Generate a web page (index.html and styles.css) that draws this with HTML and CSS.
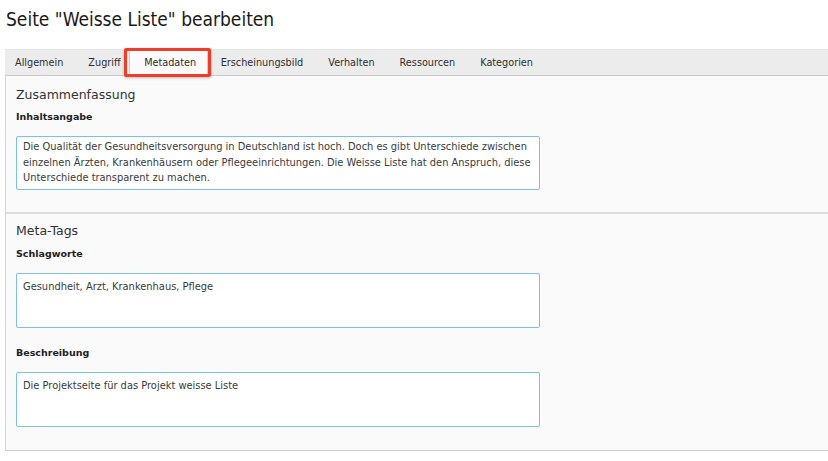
FILE: index.html
```html
<!DOCTYPE html>
<html lang="de">
<head>
<meta charset="utf-8">
<title>Seite bearbeiten</title>
<link rel="stylesheet" href="styles.css">
</head>
<body>
<div class="page">
  <h1 class="title">Seite "Weisse Liste" bearbeiten</h1>
  <div class="editor">
    <ul class="tabs">
      <li class="tab">Allgemein</li>
      <li class="tab">Zugriff</li>
      <li class="tab active">Metadaten</li>
      <li class="tab">Erscheinungsbild</li>
      <li class="tab">Verhalten</li>
      <li class="tab">Ressourcen</li>
      <li class="tab">Kategorien</li>
    </ul>
    <div class="panel">
      <section class="section first">
        <h2 class="section-title">Zusammenfassung</h2>
        <label class="field-label">Inhaltsangabe</label>
        <div class="textarea tall">Die Qualität der Gesundheitsversorgung in Deutschland ist hoch. Doch es gibt Unterschiede zwischen einzelnen Ärzten, Krankenhäusern oder Pflegeeinrichtungen. Die Weisse Liste hat den Anspruch, diese Unterschiede transparent zu machen.</div>
      </section>
      <section class="section second">
        <h2 class="section-title">Meta-Tags</h2>
        <label class="field-label">Schlagworte</label>
        <div class="textarea">Gesundheit, Arzt, Krankenhaus, Pflege</div>
        <label class="field-label spaced">Beschreibung</label>
        <div class="textarea">Die Projektseite für das Projekt weisse Liste</div>
      </section>
    </div>
  </div>
</div>
</body>
</html>
```

FILE: styles.css
```css
html, body {
  margin: 0;
  padding: 0;
  background: #ffffff;
}

.page {
  padding: 8px 0 0 5px;
  font-family: "DejaVu Sans", Verdana, sans-serif;
  color: #333;
}

.title {
  margin: 0 0 0 1px;
  font-family: "DejaVu Sans Condensed", "DejaVu Sans", sans-serif;
  font-stretch: condensed;
  font-weight: normal;
  font-size: 19px;
  line-height: 22px;
  color: #1a1a1a;
  height: 41px;
}

.editor {
  display: flex;
  flex-direction: column;
}

.tabs {
  list-style: none;
  margin: 0;
  padding: 0;
  display: flex;
  height: 25px;
  background: #ececec;
  border-top: 1px solid #e6e6e6;
  border-bottom: 1px solid #c9c9c9;
}

.tab {
  position: relative;
  padding: 0 12.5px;
  font-size: 9.7px;
  line-height: 25px;
  color: #2e2e2e;
  white-space: nowrap;
}

.tab:first-child {
  padding-left: 10px;
}

.tab.active {
  margin-left: -4px;
  padding: 0 11px 0 14px;
  background: #fafafa;
  border-left: 1px solid #cfcfcf;
  border-right: 1px solid #cfcfcf;
  height: 26px;
}

.tab.active::after {
  content: "";
  position: absolute;
  left: -6px;
  right: -4px;
  top: -2px;
  bottom: -1px;
  border: 3px solid #ea3f2a;
  border-radius: 2px;
  box-shadow: 0 1px 3px rgba(0, 0, 0, 0.25);
}

.panel {
  background: #fafafa;
  border-left: 1px solid #d6d6d6;
  border-bottom: 1px solid #cccccc;
}

.section {
  padding: 9px 10px 22px 10px;
}

.section.second {
  border-top: 2px solid #dedede;
  padding-top: 7px;
  padding-bottom: 23px;
}

.section-title {
  margin: 0;
  font-size: 12.5px;
  font-weight: normal;
  line-height: 20px;
  color: #333;
}

.field-label {
  display: block;
  margin-top: 5px;
  font-size: 9.5px;
  font-weight: bold;
  line-height: 14px;
  color: #222;
}

.second .field-label {
  margin-top: 6px;
}

.second .field-label.spaced {
  margin-top: 18px;
}

.textarea {
  box-sizing: border-box;
  width: 524px;
  height: 55px;
  margin-top: 12px;
  padding: 5px 1px 5px 6px;
  background: #ffffff;
  border: 1px solid #7dbfe9;
  border-radius: 2px;
  font-size: 9.9px;
  line-height: 15.5px;
  color: #3a3a3a;
}

.textarea.tall {
  height: 54px;
  padding-top: 2px;
}
```
